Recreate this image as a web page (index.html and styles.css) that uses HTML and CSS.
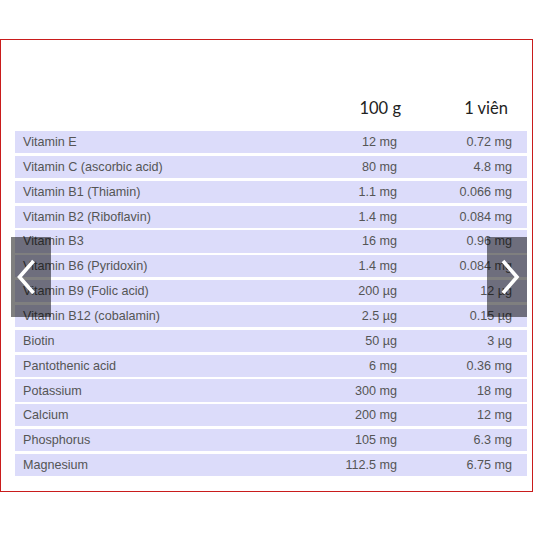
FILE: index.html
```html
<!DOCTYPE html>
<html>
<head>
<meta charset="utf-8">
<link rel="stylesheet" href="styles.css">
</head>
<body>
<div class="frame">
  <div class="head">
    <span></span>
    <span class="h2">100 g</span>
    <span class="h3">1 viên</span>
  </div>
  <div class="rows">
    <div class="row"><span>Vitamin E</span><span class="v">12 mg</span><span class="v">0.72 mg</span></div>
    <div class="row"><span>Vitamin C (ascorbic acid)</span><span class="v">80 mg</span><span class="v">4.8 mg</span></div>
    <div class="row"><span>Vitamin B1 (Thiamin)</span><span class="v">1.1 mg</span><span class="v">0.066 mg</span></div>
    <div class="row"><span>Vitamin B2 (Riboflavin)</span><span class="v">1.4 mg</span><span class="v">0.084 mg</span></div>
    <div class="row"><span>Vitamin B3</span><span class="v">16 mg</span><span class="v">0.96 mg</span></div>
    <div class="row"><span>Vitamin B6 (Pyridoxin)</span><span class="v">1.4 mg</span><span class="v">0.084 mg</span></div>
    <div class="row"><span>Vitamin B9 (Folic acid)</span><span class="v">200 µg</span><span class="v">12 µg</span></div>
    <div class="row"><span>Vitamin B12 (cobalamin)</span><span class="v">2.5 µg</span><span class="v">0.15 µg</span></div>
    <div class="row"><span>Biotin</span><span class="v">50 µg</span><span class="v">3 µg</span></div>
    <div class="row"><span>Pantothenic acid</span><span class="v">6 mg</span><span class="v">0.36 mg</span></div>
    <div class="row"><span>Potassium</span><span class="v">300 mg</span><span class="v">18 mg</span></div>
    <div class="row"><span>Calcium</span><span class="v">200 mg</span><span class="v">12 mg</span></div>
    <div class="row"><span>Phosphorus</span><span class="v">105 mg</span><span class="v">6.3 mg</span></div>
    <div class="row"><span>Magnesium</span><span class="v">112.5 mg</span><span class="v">6.75 mg</span></div>
  </div>
  <div class="nav nav-prev">
    <svg width="40" height="80" viewBox="0 0 40 80"><polyline points="22.5,24 8.5,40 22.5,56" fill="none" stroke="#fff" stroke-width="3.6"/></svg>
  </div>
  <div class="nav nav-next">
    <svg width="40" height="80" viewBox="0 0 40 80"><polyline points="16,24 30,40 16,56" fill="none" stroke="#fff" stroke-width="3.6"/></svg>
  </div>
</div>
</body>
</html>
```
FILE: styles.css
```css
html, body {
  margin: 0;
  padding: 0;
  background: #fff;
}
body {
  font-family: "Liberation Sans", Arial, sans-serif;
}
.frame {
  position: relative;
  margin-top: 39px;
  border: 1px solid #c91c1c;
  padding: 0 5px 15px 14px;
}
.head {
  display: grid;
  grid-template-columns: 1fr 110px 115px;
  height: 91px;
  align-items: end;
  font-family: Lato, "Open Sans", sans-serif;
  font-size: 16.5px;
  line-height: 20px;
  color: #222;
}
.head span {
  padding-bottom: 13.5px;
  text-align: right;
}
.h2 { padding-right: 11px; }
.h3 { padding-right: 19px; }
.rows {
  display: flex;
  flex-direction: column;
  gap: 2.67px;
}
.row {
  display: grid;
  grid-template-columns: 1fr 110px 115px;
  align-items: center;
  height: 22.2px;
  background: #dcdcfa;
  font-family: "Liberation Sans", Arial, sans-serif;
  font-size: 12.6px;
  color: #555;
  padding-left: 8px;
}
.row .v {
  text-align: right;
  padding-right: 15px;
}
.nav {
  position: absolute;
  top: 197px;
  width: 40px;
  height: 80px;
  background: rgba(0, 0, 0, 0.5);
}
.nav svg { display: block; }
.nav-prev { left: 10px; }
.nav-next { left: 486px; }
```
